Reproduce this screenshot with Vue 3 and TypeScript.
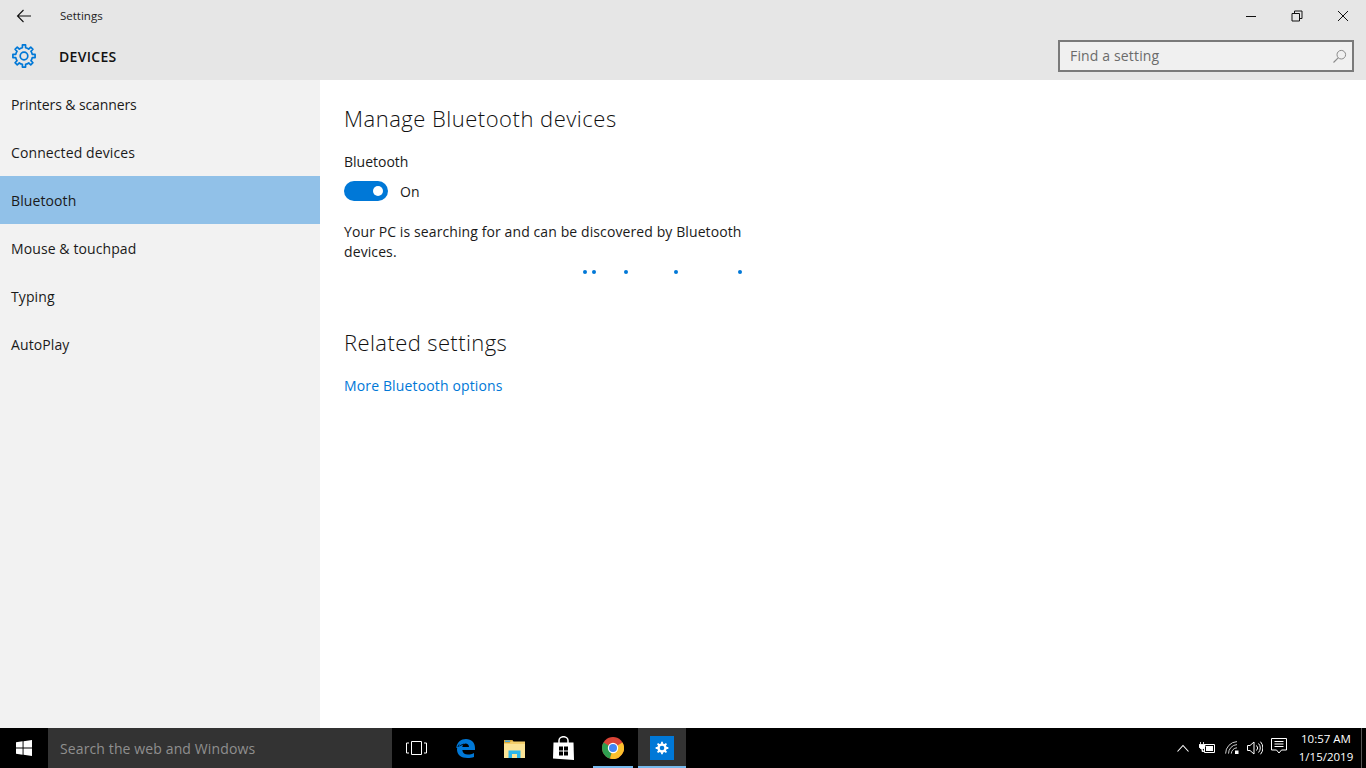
<script setup lang="ts">
const navItems: string[] = ['Printers & scanners', 'Connected devices', 'Bluetooth', 'Mouse & touchpad', 'Typing', 'AutoPlay']
const dots: number[] = [0, 9, 41, 91, 155]

function gearPath(c: number, outer: number, inner: number): string {
  const rad = (d: number) => (d * Math.PI) / 180
  const pt = (r: number, d: number) => `${(c + r * Math.cos(rad(d))).toFixed(2)} ${(c + r * Math.sin(rad(d))).toFixed(2)}`
  let p = ''
  for (let i = 0; i < 8; i++) {
    const a = i * 45 - 90
    p += `${i === 0 ? 'M' : `A${inner} ${inner} 0 0 1 `}${pt(inner, a - 11)}L${pt(outer, a - 8)}L${pt(outer, a + 8)}L${pt(inner, a + 11)}`
  }
  return p + `A${inner} ${inner} 0 0 1 ${pt(inner, -101)}Z`
}
const headerGear = gearPath(13, 11.2, 8.4)
const tileGear = gearPath(7, 6.4, 4.7)
</script>

<template>
  <div class="window">
    <header class="top">
      <div class="titlebar">
        <button class="back" aria-label="Back">
          <svg width="16" height="16" viewBox="0 0 16 16"><path d="M15 8H1.5M7.5 2 1.5 8l6 6" fill="none" stroke="#111" stroke-width="1.1"/></svg>
        </button>
        <span class="title">Settings</span>
        <div class="controls">
          <span class="ctl"><svg width="12" height="12" viewBox="0 0 12 12"><path d="M1 6.5h10" stroke="#111" stroke-width="1"/></svg></span>
          <span class="ctl"><svg width="12" height="12" viewBox="0 0 12 12"><path d="M1 3.5h7.5V11H1zM3.5 3.5V1H11v7.5H8.5" fill="none" stroke="#111" stroke-width="1"/></svg></span>
          <span class="ctl"><svg width="12" height="12" viewBox="0 0 12 12"><path d="m1 1 10 10M11 1 1 11" stroke="#111" stroke-width="1"/></svg></span>
        </div>
      </div>
      <div class="headrow">
        <svg class="gear" width="26" height="26" viewBox="0 0 26 26">
          <path :d="headerGear" fill="none" stroke="#0078d7" stroke-width="1.7" stroke-linejoin="round"/>
          <circle cx="13" cy="13" r="3.8" fill="none" stroke="#0078d7" stroke-width="1.7"/>
        </svg>
        <span class="section">DEVICES</span>
        <div class="search">
          <span class="search-text">Find a setting</span>
          <svg width="15" height="15" viewBox="0 0 15 15"><circle cx="9.3" cy="5.7" r="4.3" fill="none" stroke="#8a8a8a"/><path d="M6.2 8.8 1.5 13.5" stroke="#8a8a8a" stroke-width="1.1"/></svg>
        </div>
      </div>
    </header>

    <div class="body">
      <nav class="side">
        <div v-for="item in navItems" :key="item" class="nav" :class="{ active: item === 'Bluetooth' }">{{ item }}</div>
      </nav>
      <main class="content">
        <h1 class="h manage">Manage Bluetooth devices</h1>
        <div class="label">Bluetooth</div>
        <div class="toggle-row">
          <span class="toggle"><span class="knob"></span></span>
          <span class="on">On</span>
        </div>
        <p class="desc">Your PC is searching for and can be discovered by Bluetooth devices.</p>
        <div class="progress">
          <span v-for="d in dots" :key="d" class="dot" :style="{ left: d + 'px' }"></span>
        </div>
        <h2 class="h related">Related settings</h2>
        <a class="link">More Bluetooth options</a>
      </main>
    </div>

    <footer class="taskbar">
      <div class="start">
        <svg width="16" height="16" viewBox="0 0 17 17"><path d="M0 2.4 7 1.4V8H0zM8 1.3 17 0v8H8zM0 9h7v6.6L0 14.6zM8 9h9v8l-9-1.3z" fill="#fff"/></svg>
      </div>
      <div class="tsearch">Search the web and Windows</div>
      <div class="apps">
        <div class="app">
          <svg width="21" height="14" viewBox="0 0 21 14"><path d="M5.5.5h10v13h-10zM3 2H.5v10H3M18 2h2.5v10H18" fill="none" stroke="#fff"/></svg>
        </div>
        <div class="app">
          <svg width="19" height="19" viewBox="0 0 19 19">
            <path fill-rule="evenodd" fill="#0078d7" d="M.3 8.8C1 3.3 5 0 10 0c5.5 0 9 3.6 9 9v2H6.3c.3 3 2.5 4.5 5.500 4.500 2.400 0 4.300-.6 6.200-1.600v4C16 18.700 14 19 11.500 19 5 19 1 15.500 1 10.500 1 8 2 6 4 4.500 3 6 2.600 7 2.400 7.800 4 6 6.800 4.500 9.500 4.500zM6.300 8H13c0-2.200-1.400-3.500-3.500-3.500-1.700 0-2.900 1.300-3.200 3.500z"/>
          </svg>
        </div>
        <div class="app">
          <svg width="21" height="19" viewBox="0 0 21 19">
            <path d="M0 1h8l1.500 1.500H21V19H0z" fill="#f4cf6b"/>
            <path d="M0 1h8l1.500 1.500H7L5.500 4H0z" fill="#d9a93a"/>
            <path d="M1 1.500h5v1.500H1z" fill="#4aa8d8"/>
            <path d="M0 5h21v14H0z" fill="#fbe496"/>
            <path d="M4.500 19v-7.500h12V19h-3.500v-4H8v4z" fill="#2db6ea"/>
          </svg>
        </div>
        <div class="app">
          <svg width="21" height="24" viewBox="0 0 21 24">
            <path d="M6 7V4.500a4.500 3.800 0 0 1 9 0V7" fill="none" stroke="#fff" stroke-width="1.500"/>
            <path d="M.5 6.500H20.500L21 24 0 22.500z" fill="#fff"/>
            <path d="M6 10.500h4v4H6zM11 10.500h4v4h-4zM6 15.500h4v4H6zM11 15.500h4v4h-4z" fill="#000"/>
          </svg>
        </div>
        <div class="app chrome">
          <svg width="22" height="22" viewBox="0 0 22 22">
            <circle cx="11" cy="11" r="11" fill="#db4437"/>
            <path d="M11 11 1.500 5.500A11 11 0 0 0 8 21.600z" fill="#2e9e4f"/>
            <path d="M11 11 20.500 5.500A11 11 0 0 1 8 21.600z" fill="#fbc02d"/>
            <circle cx="11" cy="11" r="5.200" fill="#fff"/>
            <circle cx="11" cy="11" r="4" fill="#4285f4"/>
          </svg>
        </div>
        <div class="app current">
          <span class="settings-tile">
            <svg width="14" height="14" viewBox="0 0 14 14">
              <path :d="tileGear" fill="#fff"/>
              <circle cx="7" cy="7" r="2.300" fill="#0078d7"/>
            </svg>
          </span>
        </div>
      </div>
      <div class="tray">
        <svg class="ti chev" width="12" height="8" viewBox="0 0 12 8"><path d="m.5 7.500 5.500-6 5.500 6" fill="none" stroke="#fff" stroke-width="1.100"/></svg>
        <svg class="ti batt" width="16" height="11" viewBox="0 0 16 11">
          <path d="M1.500 0v2.500M4.500 0v2.500M0 2.500h6V5L4 7H2L0 5zM3 7v2.500h2.500" fill="#fff" stroke="#fff" stroke-width=".8"/>
          <path d="M5.500 2.500h10v8h-10z" fill="none" stroke="#fff"/>
          <path d="M7 4h7v5H7z" fill="#fff"/>
        </svg>
        <svg class="ti wifi" width="14" height="13" viewBox="0 0 14 13"><path d="M.6 12.600A12 12 0 0 1 12 .6M3.500 12.600A9 9 0 0 1 12 3.600M6.300 12.600A6 6 0 0 1 12 6.800" fill="none" stroke="#ccc" stroke-width="1"/><path d="M10 9.500h3.500V13H10z" fill="#fff"/></svg>
        <svg class="ti vol" width="16" height="14" viewBox="0 0 16 14"><path d="M.5 4.500H3L7 1v12L3 9.500H.5zM9.500 4.500a3.500 3.500 0 0 1 0 5M11.500 2.500a6.500 6.500 0 0 1 0 9M13.500.7a9.500 9.500 0 0 1 0 12.600" fill="none" stroke="#fff"/></svg>
        <svg class="ti note" width="16" height="16" viewBox="0 0 16 16"><path d="M.5.5h15v11.500h-5L8 15l-2.500-3h-5zM3.500 3.500h9M3.500 6h9M3.500 8.500h9" fill="none" stroke="#fff"/></svg>
        <div class="clock"><div>10:57 AM</div><div>1/15/2019</div></div>
        <span class="show-desktop"></span>
      </div>
    </footer>
  </div>
</template>

<style>
body { margin: 0; }
</style>

<style scoped>
.window {
  width: 1366px;
  height: 768px;
  display: flex;
  flex-direction: column;
  overflow: hidden;
  background: #fff;
  font-family: "Open Sans", "Noto Sans", sans-serif;
  color: #1a1a1a;
}
.top { background: #e6e6e6; height: 80px; flex: none; }
.titlebar { height: 32px; display: flex; align-items: center; }
.back { width: 48px; height: 32px; border: 0; padding: 0; background: none; display: flex; align-items: center; justify-content: center; }
.title { font-size: 11.5px; margin-left: 12px; padding-bottom: 2px; color: #222; }
.controls { margin-left: auto; display: flex; }
.ctl { width: 46px; height: 32px; display: flex; align-items: center; justify-content: center; }
.headrow { height: 48px; display: flex; align-items: center; padding: 0 12px 0 11px; }
.gear { flex: none; }
.section { margin-left: 22px; font-size: 14px; font-weight: 600; letter-spacing: .3px; color: #111; }
.search {
  margin-left: auto;
  width: 296px;
  height: 32px;
  box-sizing: border-box;
  border: 2px solid #7a7a7a;
  background: #f0f0f0;
  display: flex;
  align-items: center;
  justify-content: space-between;
  padding: 0 5px 0 10px;
}
.search-text { font-size: 14px; letter-spacing: .15px; padding-bottom: 2px; color: #6b6b6b; }
.body { flex: 1; display: flex; min-height: 0; }
.side { width: 320px; flex: none; background: #f2f2f2; }
.nav { height: 48px; line-height: 50px; padding-left: 11px; font-size: 14px; letter-spacing: .1px; color: #1a1a1a; }
.nav:first-child { letter-spacing: -.1px; }
.active { background: #91c1e8; }
.content { flex: 1; padding: 0 24px; }
.h { margin: 0; font-size: 22px; font-weight: 300; line-height: 30px; letter-spacing: .4px; color: #111; }
.manage { margin-top: 23px; letter-spacing: .5px; }
.label { font-size: 14px; line-height: 20px; margin-top: 19px; }
.toggle-row { display: flex; align-items: center; margin-top: 9px; height: 20px; }
.toggle { width: 44px; height: 20px; border-radius: 10px; background: #0078d7; position: relative; display: block; }
.knob { position: absolute; width: 10px; height: 10px; border-radius: 50%; background: #fff; right: 5px; top: 5px; }
.on { font-size: 14px; margin-left: 12px; }
.desc { margin: 21px 0 0; width: 410px; font-size: 14px; line-height: 20px; letter-spacing: .1px; }
.progress { position: relative; height: 4px; margin-left: 239px; margin-top: 8px; }
.dot { position: absolute; top: 0; width: 4px; height: 4px; border-radius: 50%; background: #0078d7; }
.related { margin-top: 53px; }
.link { display: block; margin-top: 19px; font-size: 14px; line-height: 20px; letter-spacing: .14px; color: #0078d7; }
.taskbar { height: 40px; flex: none; background: #000; display: flex; color: #fff; }
.start { width: 48px; display: flex; align-items: center; justify-content: center; }
.tsearch { width: 344px; box-sizing: border-box; background: #333; color: #8f8f8f; font-size: 14px; letter-spacing: .12px; line-height: 42px; padding-left: 12px; }
.apps { display: flex; }
.app { width: 49px; height: 40px; box-sizing: border-box; position: relative; display: flex; align-items: center; justify-content: center; }
.chrome { padding-left: 1px; }
.chrome::after { content: ""; position: absolute; left: 5px; right: 4px; bottom: 0; height: 2px; background: #76b9ed; }
.current { width: 48px; margin-left: 1px; background: #333; border-bottom: 2px solid #76b9ed; padding-top: 2px; }
.settings-tile { width: 24px; height: 24px; background: #0078d7; display: flex; align-items: center; justify-content: center; }
.tray { margin-left: auto; display: flex; align-items: center; }
.ti { flex: none; }
.batt { margin-left: 10px; margin-top: -1px; }
.wifi { margin-left: 10px; margin-top: -1px; }
.vol { margin-left: 8px; margin-top: -1px; }
.note { margin-left: 8px; margin-top: -4px; }
.clock { width: 66px; margin-left: 6px; text-align: center; font-size: 11.5px; line-height: 18px; }
.show-desktop { width: 1px; height: 40px; background: #555; margin-left: 2px; margin-right: 4px; }
</style>
